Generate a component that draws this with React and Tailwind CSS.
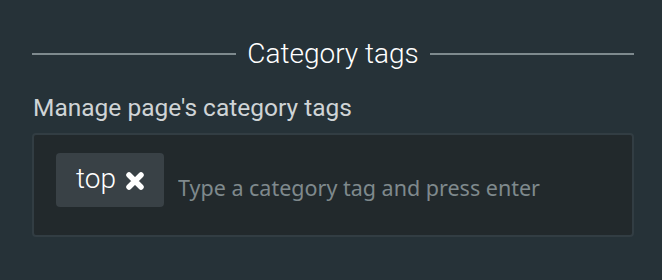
export default function App() {
  return (
    <div className="w-[662px] h-[280px] bg-[#263238] pt-[34px] pl-8 pr-7" style={{ fontFamily: "Roboto, sans-serif" }}>
      <div className="flex items-center gap-[11px]">
        <div className="flex-1 h-[2px] bg-[#7e8a8e]" />
        <h2 className="text-[28px] font-light text-white leading-[40px]">Category tags</h2>
        <div className="flex-1 h-[2px] bg-[#7e8a8e]" />
      </div>
      <label className="block mt-[19px] text-[24.5px] text-[#cfd4d6] leading-[30px] pl-[1px]">
        Manage page's category tags
      </label>
      <div className="mt-[10px] h-[104px] rounded-[4px] border-2 border-[#323d43] bg-[#22292c] flex items-start pl-[22px] pt-[18px]">
        <span className="flex items-center gap-[9px] h-[54px] pl-5 pr-[19px] rounded-[4px] bg-[#394146] text-white text-[28px] font-light leading-none">
          <span className="-mt-[3px]">top</span>
          <svg width="20" height="20" viewBox="0 0 20 20" className="mt-[1px]">
            <path d="M4 4 L16 16 M16 4 L4 16" stroke="white" strokeWidth="5.5" strokeLinecap="round" />
          </svg>
        </span>
        <input
          className="ml-[14px] mt-[7px] h-[54px] flex-1 bg-transparent outline-none text-[21.5px] text-white placeholder:text-[#7f898d]"
          style={{ fontFamily: "'Noto Sans', sans-serif" }}
          placeholder="Type a category tag and press enter"
        />
      </div>
    </div>
  );
}
